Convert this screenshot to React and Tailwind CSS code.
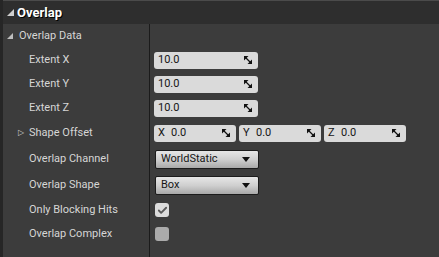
import { Check } from 'lucide-react';

const FONT = { fontFamily: 'Roboto, "Liberation Sans", sans-serif' };

const SpinIcon = () => (
    <svg width="8" height="8" viewBox="0 0 8 8" className="shrink-0">
        <path d="M0 0H4.5L0 4.5Z" fill="#111" />
        <path d="M8 3.5V8H3.5Z" fill="#111" />
        <path d="M1 1L7 7" stroke="#111" strokeWidth="1.2" />
    </svg>
);

const NumberField = ({ value, axis, width = 'w-[104px]' }) => (
    <div className={`${width} h-[17px] rounded-[3px] bg-[#dadada] flex items-center pl-[4px] pr-[6px] text-[11px] text-[#151515]`}>
        {axis && <span className="w-[13px]">{axis}</span>}
        <span className="flex-1">{value}</span>
        <SpinIcon />
    </div>
);

const Dropdown = ({ value }) => (
    <div className="w-[104px] h-[19px] rounded-[2px] border border-[#1c1c1c] bg-gradient-to-b from-[#e6e6e6] via-[#cfcfcf] to-[#a9a9a9] flex items-center pl-[5px] pr-[8px] text-[11px] text-[#151515]">
        <span className="flex-1">{value}</span>
        <svg width="8" height="5" viewBox="0 0 8 5">
            <path d="M0 0H8L4 5Z" fill="#111" />
        </svg>
    </div>
);

const CheckBox = ({ checked }) => (
    <div className={`w-[14px] h-[14px] rounded-[3px] flex items-center justify-center ${checked ? 'bg-[#dcdcdc]' : 'bg-[#ababab]'}`}>
        {checked && <Check size={11} strokeWidth={4} color="#5a5a5a" />}
    </div>
);

const Row = ({ label, height, expander, children }) => (
    <div className="flex" style={{ height }}>
        <div className="w-[147px] shrink-0 border-r border-[#1b1b1b] flex items-center pl-[15px] text-[11px] text-[#d6d6d6]">
            <span className="w-[11px] text-[8px] text-[#cfcfcf]">{expander ? '▷' : ''}</span>
            {label}
        </div>
        <div className="flex-1 flex items-center gap-[3px] pl-[4px]">{children}</div>
    </div>
);

const App = () => {
    return (
        <div className="w-[439px] h-[257px] bg-[#3c3c3c] flex flex-col overflow-hidden border-l-[3px] border-[#262626]" style={FONT}>
            {/* category header */}
            <div className="h-[24px] shrink-0 bg-[#2e2e2e] border-t border-[#4b4b4b] flex items-center pl-[4px] gap-[3px]">
                <svg width="7" height="7" viewBox="0 0 7 7">
                    <path d="M7 0V7H0Z" fill="#cfcfcf" />
                </svg>
                <span className="text-[13px] font-bold text-white [text-shadow:1px_1px_0_#000]">Overlap</span>
            </div>

            <div className="flex-1 flex flex-col">
                <div className="flex h-[24px]">
                    <div className="w-[147px] shrink-0 border-r border-[#1b1b1b] flex items-center pl-[4px] gap-[6px] text-[11px] text-[#d6d6d6]">
                        <svg width="6" height="6" viewBox="0 0 6 6">
                            <path d="M6 0V6H0Z" fill="#bdbdbd" />
                        </svg>
                        Overlap Data
                    </div>
                    <div className="flex-1" />
                </div>

                <Row label="Extent X" height={24}><NumberField value="10.0" /></Row>
                <Row label="Extent Y" height={24}><NumberField value="10.0" /></Row>
                <Row label="Extent Z" height={24}><NumberField value="10.0" /></Row>
                <Row label="Shape Offset" height={26} expander>
                    <NumberField axis="X" value="0.0" width="w-[82px]" />
                    <NumberField axis="Y" value="0.0" width="w-[82px]" />
                    <NumberField axis="Z" value="0.0" width="w-[82px]" />
                </Row>
                <Row label="Overlap Channel" height={27}><div className="pl-[1px]"><Dropdown value="WorldStatic" /></div></Row>
                <Row label="Overlap Shape" height={25}><div className="pl-[1px]"><Dropdown value="Box" /></div></Row>
                <Row label="Only Blocking Hits" height={24}><div className="pl-[1px]"><CheckBox checked /></div></Row>
                <Row label="Overlap Complex" height={24}><div className="pl-[1px]"><CheckBox /></div></Row>
                <div className="flex flex-1">
                    <div className="w-[147px] shrink-0 border-r border-[#1b1b1b]" />
                </div>
            </div>
        </div>
    );
};

export default App;
